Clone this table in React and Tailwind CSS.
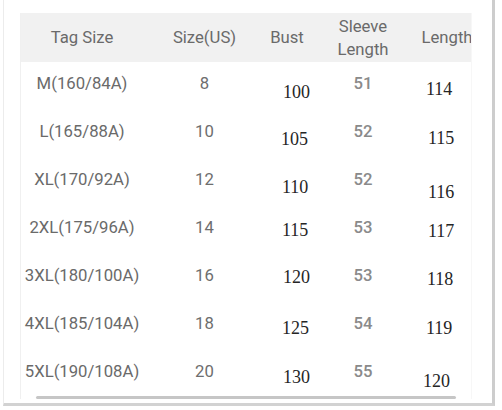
const rows = [
  { tag: 'M(160/84A)', us: '8', bust: '100', bustCls: 'pt-[20px] pl-[17px]', sleeve: '51', len: '114', lenCls: 'pt-[17px] pl-[8px]' },
  { tag: 'L(165/88A)', us: '10', bust: '105', bustCls: 'pt-[19px] pl-[15px]', sleeve: '52', len: '115', lenCls: 'pt-[18px] pl-[10px]' },
  { tag: 'XL(170/92A)', us: '12', bust: '110', bustCls: 'pt-[19px] pl-[16px]', sleeve: '52', len: '116', lenCls: 'pt-[24px] pl-[10px]' },
  { tag: '2XL(175/96A)', us: '14', bust: '115', bustCls: 'pt-[14px] pl-[16px]', sleeve: '53', len: '117', lenCls: 'pt-[15px] pl-[10px]' },
  { tag: '3XL(180/100A)', us: '16', bust: '120', bustCls: 'pt-[13px] pl-[17px]', sleeve: '53', len: '118', lenCls: 'pt-[15px] pl-[9px]' },
  { tag: '4XL(185/104A)', us: '18', bust: '125', bustCls: 'pt-[16px] pl-[16px]', sleeve: '54', len: '119', lenCls: 'pt-[16px] pl-[8px]' },
  { tag: '5XL(190/108A)', us: '20', bust: '130', bustCls: 'pt-[17px] pl-[17px]', sleeve: '55', len: '120', lenCls: 'pt-[21px] pl-[5px]' },
];

const cols = 'grid grid-cols-[122px_123px_42px_110px_59px]';

export default function App() {
  return (
    <div className="w-[502px] h-[410px] bg-white overflow-hidden font-['Roboto','Liberation_Sans',sans-serif]">
      <div className="ml-[3px] w-[492px] h-[406px] border-l border-l-[#ececec] border-r-[3px] border-r-[#cdcdcd] border-b-[3px] border-b-[#d2d2d2] pl-[16px] pt-[13px]">
        <div className="w-[452px] overflow-hidden border-l border-l-[#f0f0f0] border-r border-r-[#f7f7f7]">
          <div className={`${cols} h-[49px] bg-[#f1f1f1] text-[16.7px] text-[#6a6a6a] text-center items-center`}>
            <div className="whitespace-nowrap">Tag Size</div>
            <div className="whitespace-nowrap">Size(US)</div>
            <div className="whitespace-nowrap">Bust</div>
            <div className="leading-[23px]">
              <div>Sleeve</div>
              <div>Length</div>
            </div>
            <div className="whitespace-nowrap pr-[1px]">Length</div>
          </div>
          {rows.map((r, i) => (
            <div key={r.tag} className={`${cols} ${i === 6 ? 'h-[46px]' : 'h-[48px]'} text-[16.7px] leading-[19px]`}>
              <div className="pt-[12px] text-center text-[#6a6a6a] whitespace-nowrap">{r.tag}</div>
              <div className="pt-[12px] text-center text-[#6e6e6e]">{r.us}</div>
              <div className={`${r.bustCls} whitespace-nowrap font-['Liberation_Serif',serif] text-[18px] leading-[20px] text-[#252525]`}>{r.bust}</div>
              <div className="pt-[12px] text-center text-[#8a8a8a] font-medium">{r.sleeve}</div>
              <div className={`${r.lenCls} whitespace-nowrap font-['Liberation_Serif',serif] text-[18px] leading-[20px] text-[#252525]`}>{r.len}</div>
            </div>
          ))}
          <div className="ml-[15px] w-[420px] h-[3px] rounded-full bg-[#c6c6c6]" />
        </div>
      </div>
    </div>
  );
}
